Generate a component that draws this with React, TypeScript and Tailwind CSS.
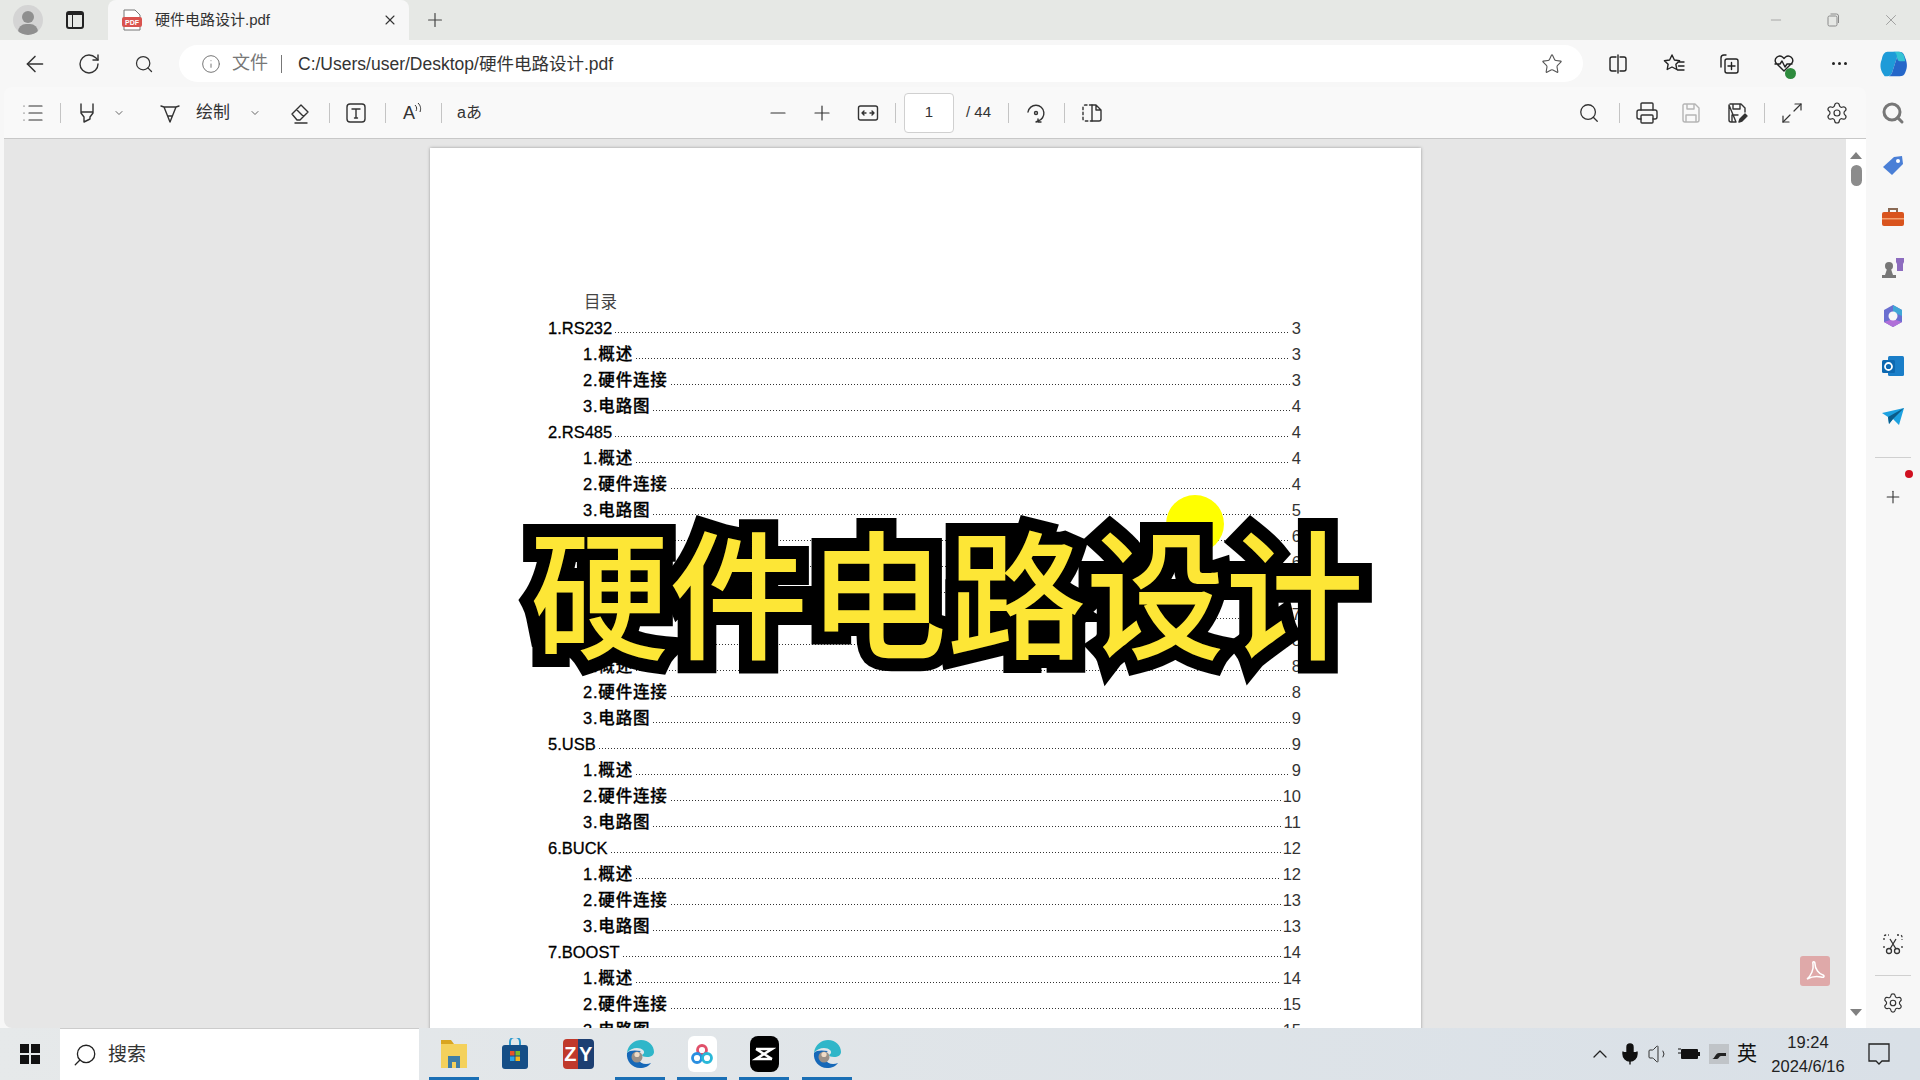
import { ArrowLeft, ChevronDown, ChevronUp, Info, List, Maximize2, Mic, Minus, Plus, Printer, RotateCw, Search, Settings, Star, Volume1, X } from 'lucide-react';
import type { ReactNode } from 'react';

const FONT = "font-['Liberation_Sans','Noto_Sans_CJK_SC',sans-serif]";

type Row = { label: string; page: number; top?: boolean };

const sub = (a: number, b: number, c: number): Row[] => [
  { label: '1.概述', page: a },
  { label: '2.硬件连接', page: b },
  { label: '3.电路图', page: c },
];

const rows: Row[] = [
  { label: '1.RS232', page: 3, top: true },
  ...sub(3, 3, 4),
  { label: '2.RS485', page: 4, top: true },
  ...sub(4, 4, 5),
  { label: '3.CAN', page: 6, top: true },
  ...sub(6, 7, 7),
  { label: '4.I2C', page: 8, top: true },
  ...sub(8, 8, 9),
  { label: '5.USB', page: 9, top: true },
  ...sub(9, 10, 11),
  { label: '6.BUCK', page: 12, top: true },
  ...sub(12, 13, 13),
  { label: '7.BOOST', page: 14, top: true },
  ...sub(14, 15, 15),
];

function Glyph({ children, className = 'text-[#333]' }: { children: ReactNode; className?: string }) {
  return (
    <svg viewBox="0 0 24 24" fill="none" stroke="currentColor" strokeWidth="1.4" strokeLinejoin="round" strokeLinecap="round" className={`w-6 h-6 shrink-0 ${className}`}>
      {children}
    </svg>
  );
}

function Sep({ className }: { className: string }) {
  return <div className={`w-px h-5 bg-[#c4c4c4] shrink-0 ${className}`} />;
}

function TocRow({ row }: { row: Row }) {
  return (
    <div className={`flex items-center h-[26px] ${row.top ? '' : 'pl-[35px]'}`}>
      <span className={`font-medium text-black [-webkit-text-stroke:0.3px_#000] ${row.top ? '' : 'tracking-[0.8px]'}`}>{row.label}</span>
      <span className="flex-1 ml-[3px] mr-[2px] mt-[9px] h-px bg-[linear-gradient(to_right,#333_1px,transparent_1px)] bg-[length:3px_1px]" />
      <span className="text-[#333]">{row.page}</span>
    </div>
  );
}

function EdgeLogo() {
  return (
    <svg viewBox="0 0 32 32" className="w-8 h-8">
      <path d="M3 15C4 6 11 2 17 2c8 0 13 6 13 12 0 3-3 5-7 5-3 0-5-1-5-2 2-1 3-3 1-5-3-3-12-3-16 3z" fill="#2fb6c9" />
      <path d="M3 15c-1 8 5 15 13 15 5 0 9-2 11-5-5 2-11 1-13-4-1-4 1-7 3-8-6-1-12-1-14 2z" fill="#1668b8" />
      <circle cx="13" cy="19" r="5.5" fill="#9a9088" />
      <circle cx="13" cy="16.5" r="2.6" fill="#f0dcc8" />
    </svg>
  );
}

function TaskIcon({ children, active, className }: { children: ReactNode; active?: boolean; className: string }) {
  return (
    <div className={`relative w-[50px] h-full flex items-center justify-center shrink-0 ${className}`}>
      {children}
      {active && <div className="absolute left-0 right-0 bottom-0 h-[3px] bg-[#1a6fb5]" />}
    </div>
  );
}

export default function App() {
  return (
    <div className={`relative w-[1920px] h-[1080px] overflow-hidden flex flex-col bg-[#f7f7f7] ${FONT}`}>
      {/* tab strip */}
      <div className="h-10 shrink-0 flex items-center bg-[#e6e8e5]">
        <div className="relative ml-[13px] w-[30px] h-[30px] rounded-full bg-[#d4d4d4] overflow-hidden shrink-0">
          <div className="absolute left-[9px] top-[6px] w-3 h-3 rounded-full bg-[#8f8f8f]" />
          <div className="absolute left-[5px] top-[19px] w-5 h-4 rounded-full bg-[#8f8f8f]" />
        </div>
        <div className="w-[18px] h-[18px] ml-[23px] shrink-0 rounded-[3px] border-2 border-[#222] border-t-4 flex">
          <div className="w-[5px] border-r border-[#222]" />
        </div>
        <div className="ml-[24px] w-[301px] h-[40px] self-end bg-[#f7f7f7] rounded-t-lg flex items-center shrink-0">
          <svg viewBox="0 0 20 22" className="ml-[14px] w-5 h-[22px] shrink-0">
            <path d="M2 1h11l5 5v15H2z" fill="#fff" stroke="#777" strokeWidth="1" />
            <rect x="0" y="8" width="20" height="10" rx="2" fill="#d9534f" />
            <text x="10" y="16" textAnchor="middle" fontSize="7" fontWeight="700" fill="#fff">PDF</text>
          </svg>
          <span className="ml-[13px] text-[15px] text-[#333]">硬件电路设计.pdf</span>
          <X className="ml-auto mr-[11px] w-4 h-4 text-[#333]" strokeWidth={1.6} />
        </div>
        <Plus className="ml-[15px] w-[22px] h-[22px] text-[#444]" strokeWidth={1.3} />
        <div className="ml-auto flex items-center text-[#8a8a8a]">
          <Minus className="w-4 h-4" strokeWidth={1} />
          <svg viewBox="0 0 16 16" fill="none" stroke="currentColor" className="ml-[41px] w-4 h-4">
            <rect x="3" y="4" width="9" height="10" rx="1.5" />
            <path d="M5.5 2h6a2 2 0 0 1 2 2v7" />
          </svg>
          <X className="ml-[41px] mr-[20px] w-[18px] h-[18px]" strokeWidth={1} />
        </div>
      </div>

      {/* address row */}
      <div className="h-[47px] shrink-0 flex items-center">
        <ArrowLeft className="ml-[22px] w-[26px] h-[26px] text-[#333]" strokeWidth={1.4} />
        <RotateCw className="ml-[29px] w-[24px] h-[24px] text-[#333]" strokeWidth={1.4} />
        <Search className="ml-[33px] w-5 h-5 text-[#333]" strokeWidth={1.5} />
        <div className="ml-[25px] w-[1404px] h-[37px] rounded-full bg-white flex items-center shrink-0">
          <Info className="ml-[22px] w-5 h-5 text-[#777]" strokeWidth={1.2} />
          <span className="ml-[11px] text-[18px] text-[#777]">文件</span>
          <div className="ml-[13px] w-px h-[18px] bg-[#777]" />
          <span className="ml-[16px] mt-px text-[17.5px] text-[#333]">C:/Users/user/Desktop/硬件电路设计.pdf</span>
          <Star className="ml-auto mr-[20px] w-[22px] h-[22px] text-[#555]" strokeWidth={1.2} />
        </div>
        <Glyph className="ml-[23px] text-[#222]">
          <path d="M12 3v18M10 5H6a2 2 0 0 0-2 2v10a2 2 0 0 0 2 2h4M14 5h4a2 2 0 0 1 2 2v10a2 2 0 0 1-2 2h-4" />
        </Glyph>
        <Glyph className="ml-[32px] text-[#222]">
          <path d="M10 3l2.4 5 5.2.7-3.7 3.6.9 5.2L10 15l-4.800 2.500.9-5.200L2.400 8.700 7.600 8zM16 10h6M16.500 14h5.500M15.500 18h6.500" />
        </Glyph>
        <Glyph className="ml-[31px] text-[#222]">
          <path d="M9 3H7a3 3 0 0 0-3 3v9M10 7h9a2 2 0 0 1 2 2v10a2 2 0 0 1-2 2h-9a2 2 0 0 1-2-2V9a2 2 0 0 1 2-2zM14.500 10.500v7M11 14h7" />
        </Glyph>
        <div className="relative ml-[31px] shrink-0">
          <Glyph className="text-[#222]">
            <path d="M12 19l-8-8a4.500 4.500 0 0 1 6.500-6l1.500 1.500L13.500 5A4.500 4.500 0 0 1 20 11l-8 8zM3 12h5l2-3 3 6 2-3h5" />
          </Glyph>
          <div className="absolute right-[0px] bottom-[-3px] w-[11px] h-[11px] rounded-full bg-[#2e8b3d]" />
        </div>
        <div className="ml-[36px] flex gap-[3px] shrink-0">
          <div className="w-[3px] h-[3px] rounded-full bg-[#222]" />
          <div className="w-[3px] h-[3px] rounded-full bg-[#222]" />
          <div className="w-[3px] h-[3px] rounded-full bg-[#222]" />
        </div>
        <svg viewBox="0 0 32 32" className="ml-[32px] w-[30px] h-[30px] shrink-0">
          <path d="M9 3h12l-7 22c-1 3-3 4-5 4H6C2 24 0 18 3 11 4 6 6 3 9 3z" fill="#1e9bd8" />
          <path d="M14 25L21 3c3 0 5 1 6 4 3 7 4 12 1 18-1 3-3 4-6 4H10c2 0 3-2 4-4z" fill="#2567c9" />
          <path d="M19 7c-1-3-2-4-4-4h6c3 0 5 2 6 5l1 5h-6c-2 0-3-3-3-6z" fill="#35c3d4" />
        </svg>
      </div>

      {/* toolbar + viewer + sidebar */}
      <div className="flex-1 min-h-0 flex">
        <div className="ml-1 w-[1862px] flex flex-col shrink-0">
          <div className="h-[52px] shrink-0 flex items-center bg-[#f9f9f9] rounded-t-lg border-b border-[#c8c8c8] text-[#333]">
            <List className="ml-[17px] w-6 h-6 shrink-0" strokeWidth={1.2} />
            <Sep className="ml-[15px]" />
            <Glyph className="ml-[14px]"><path d="M6 3v9l3 4v5l6-3v-2l3-4V3M6 11h12" /></Glyph>
            <ChevronDown className="ml-[14px] w-3 h-3 shrink-0 text-[#666]" />
            <Glyph className="ml-[33px]"><path d="M3 5l3 1h12l3-1M6 6l6 15 6-15M10 15h4" /></Glyph>
            <span className="ml-[14px] w-[35px] text-[17px] shrink-0 whitespace-nowrap">绘制</span>
            <ChevronDown className="ml-[18px] w-3 h-3 shrink-0 text-[#666]" />
            <Glyph className="ml-[27px]"><path d="M4 13l9-9 7 7-8 8H9zM8.500 8.500l7 7M7 22h12" /></Glyph>
            <Sep className="ml-[17px]" />
            <Glyph className="ml-[14px]">
              <rect x="3" y="3" width="18" height="18" rx="3" />
              <path d="M8 8h8M12 8v9M10.500 17h3" />
            </Glyph>
            <Sep className="ml-[17px]" />
            <div className="relative ml-[14px] w-6 h-6 shrink-0 flex items-center">
              <span className="ml-[3px] text-[18px] leading-none">A</span>
              <svg viewBox="0 0 10 12" fill="none" stroke="currentColor" className="absolute right-0 top-[2px] w-2.5 h-3"><path d="M1 2c2 2 2 4 1 6M4 0c3 3 3 6 2 9" /></svg>
            </div>
            <Sep className="ml-[17px]" />
            <span className="ml-[15px] w-6 text-[16px] shrink-0 whitespace-nowrap">aあ</span>
            <Minus className="ml-[285px] w-6 h-6 shrink-0" strokeWidth={1.2} />
            <Plus className="ml-[20px] w-6 h-6 shrink-0" strokeWidth={1.2} />
            <Glyph className="ml-[22px]">
              <rect x="2.500" y="5" width="19" height="14" rx="2" />
              <path d="M6 12h4M6 12l2-2M6 12l2 2M18 12h-4M18 12l-2-2M18 12l-2 2" />
            </Glyph>
            <Sep className="ml-[15px]" />
            <div className="ml-[8px] w-[50px] h-10 shrink-0 bg-white border border-[#d0d0d0] rounded flex items-center justify-center text-[15px]">1</div>
            <span className="ml-[12px] w-7 text-[15px] shrink-0 whitespace-nowrap">/ 44</span>
            <Sep className="ml-[14px]" />
            <Glyph className="ml-[15px]">
              <path d="M4 11a8 8 0 1 1 10 9l-2 1M14 18v3h3" />
              <circle cx="12" cy="12" r="1.500" />
            </Glyph>
            <Sep className="ml-[16px]" />
            <Glyph className="ml-[15px]">
              <path d="M12 4H5a2 2 0 0 0-2 2v12a2 2 0 0 0 2 2h7" strokeDasharray="2.500 2.500" />
              <path d="M12 4h4l5 5v9a2 2 0 0 1-2 2h-7zM16 4v5h5" />
            </Glyph>
            <Search className="ml-[474px] w-[22px] h-[22px] shrink-0" strokeWidth={1.4} />
            <Sep className="ml-[19px]" />
            <Printer className="ml-[15px] w-6 h-6 shrink-0" strokeWidth={1.4} />
            <Glyph className="ml-[20px] text-[#b5b5b5]">
              <path d="M5 3h11l4 4v12a2 2 0 0 1-2 2H6a2 2 0 0 1-2-2V4zM8 3v5h7V3M7 21v-7h10v7" />
            </Glyph>
            <Glyph className="ml-[22px]">
              <path d="M5 3h11l4 4v4M11 21H6a2 2 0 0 1-2-2V4zM8 3v5h7V3M7 21v-7h6" />
              <path d="M14 21l1-3 5-5 2 2-5 5z" fill="currentColor" />
            </Glyph>
            <Sep className="ml-[15px]" />
            <Maximize2 className="ml-[15px] w-6 h-6 shrink-0" strokeWidth={1.2} />
            <Settings className="ml-[21px] w-6 h-6 shrink-0" strokeWidth={1.2} />
          </div>

          <div className="flex-1 min-h-0 flex rounded-bl-lg overflow-hidden">
            <div className="flex-1 bg-[#e6e6e6] overflow-hidden">
              <div className="ml-[426px] mt-[9px] w-[991px] pt-[141px] pl-[118px] pr-[120px] bg-white shadow-[0_0_3px_#999] text-[16.5px] leading-none">
                <div className="flex items-center h-[26px] pl-[36px] text-[#444]">目录</div>
                {rows.map((row, i) => (
                  <TocRow key={i} row={row} />
                ))}
              </div>
            </div>
            <div className="w-5 bg-white shrink-0 flex flex-col items-center relative">
              <div className="mt-[13px] w-0 h-0 border-x-[6px] border-x-transparent border-b-[7px] border-b-[#808080]" />
              <div className="mt-[6px] w-[11px] h-[21px] rounded-full bg-[#8c8c8c]" />
              <div className="mt-auto mb-[12px] w-0 h-0 border-x-[6px] border-x-transparent border-t-[7px] border-t-[#808080]" />
            </div>
          </div>
        </div>

        {/* sidebar */}
        <div className="flex-1 flex flex-col items-center">
          <Search className="mt-[14px] w-6 h-6 text-[#777]" strokeWidth={3} />
          <svg viewBox="0 0 24 24" className="mt-[29px] w-6 h-6"><path d="M2 13L13 3l8-1 1 8-11 11z" fill="#4a7fd6" /><circle cx="17" cy="7" r="2" fill="#fff" /></svg>
          <svg viewBox="0 0 24 24" className="mt-[27px] w-6 h-6"><rect x="1" y="7" width="22" height="14" rx="2" fill="#d9541e" /><path d="M8 7V4h8v3" fill="none" stroke="#8a6a55" strokeWidth="2" /><rect x="1" y="13" width="22" height="1.500" fill="#f4a070" /></svg>
          <svg viewBox="0 0 24 24" className="mt-[26px] w-6 h-6"><circle cx="8" cy="11" r="4" fill="#777" /><path d="M6 14h4l2 6H4zM1 20h14v3H1z" fill="#777" /><path d="M15 3h8v4l-1 2v7h-6V9l-1-2z" fill="#8d6cbf" /></svg>
          <svg viewBox="0 0 24 24" className="mt-[25px] w-6 h-6"><path d="M12 1l9 5v12l-9 5-9-5V6z" fill="#6a6fd0" /><path d="M12 1l9 5v6l-9-4z" fill="#3fa7d6" /><path d="M3 18l9 5 9-5-9-3z" fill="#b06fd8" /><circle cx="12" cy="12" r="4.500" fill="#f7f7f7" /></svg>
          <svg viewBox="0 0 24 24" className="mt-[26px] w-6 h-6"><rect x="7" y="2" width="16" height="20" rx="1.500" fill="#1a7ec8" /><rect x="1" y="6" width="13" height="13" rx="1.500" fill="#0d68b0" /><circle cx="7.500" cy="12.500" r="3.500" fill="none" stroke="#fff" strokeWidth="1.800" /></svg>
          <svg viewBox="0 0 24 24" className="mt-[26px] w-6 h-6"><path d="M1 9l22-5-5 17-6-6-4 5-1-7z" fill="#1da1e0" /><path d="M7 13l16-9-11 11-4 5z" fill="#0b5c8a" /></svg>
          <div className="mt-[29px] w-9 h-px bg-[#d0d0d0]" />
          <div className="relative mt-[29px]">
            <Plus className="w-5 h-5 text-[#333]" strokeWidth={1.3} />
            <div className="absolute right-[-10px] top-[-17px] w-2 h-2 rounded-full bg-[#d01020]" />
          </div>
          <svg viewBox="0 0 24 24" fill="none" stroke="#333" strokeWidth="1.300" className="mt-auto w-6 h-6">
            <path d="M3 8V5a2 2 0 0 1 2-2h3M16 3h3a2 2 0 0 1 2 2v3M3 14v3M21 14v3" strokeDasharray="2 2" />
            <circle cx="8" cy="19" r="2.500" /><circle cx="16" cy="19" r="2.500" /><path d="M9 17l6-10M15 17L9 7" />
          </svg>
          <div className="mt-[19px] w-9 h-px bg-[#d0d0d0]" />
          <Settings className="mt-4 mb-[14px] w-[22px] h-[22px] text-[#333]" strokeWidth={1.3} />
        </div>
      </div>

      {/* taskbar */}
      <div className="h-[52px] shrink-0 flex items-stretch bg-gradient-to-r from-[#e6e9ea] to-[#d9e0e7] text-[#111]">
        <div className="w-[60px] shrink-0 flex items-center justify-center">
          <div className="grid grid-cols-2 gap-[2px] w-[20px] h-[20px]">
            <div className="bg-[#111]" /><div className="bg-[#111]" /><div className="bg-[#111]" /><div className="bg-[#111]" />
          </div>
        </div>
        <div className="w-[359px] shrink-0 bg-white border-t border-[#ccc] flex items-center">
          <Search className="ml-[12px] w-[26px] h-[26px] -scale-x-100 text-[#222]" strokeWidth={1.2} />
          <span className="ml-[10px] mt-px text-[19px] text-[#333]">搜索</span>
        </div>
        <TaskIcon active className="ml-[10px]">
          <svg viewBox="0 0 28 32" className="w-7 h-8"><path d="M1 2h10l3 4H1z" fill="#d9a520" /><path d="M1 6h26v24H1z" fill="#f4d15c" /><path d="M8 30V18h12v12h-4v-6h-4v6z" fill="#3f7ea6" /></svg>
        </TaskIcon>
        <TaskIcon className="ml-[11px]">
          <svg viewBox="0 0 28 32" className="w-7 h-8"><path d="M9 8V4a5 5 0 0 1 10 0v4" fill="none" stroke="#2e9bd0" strokeWidth="2" /><rect x="1" y="7" width="26" height="24" rx="3" fill="#154e86" /><rect x="9" y="13" width="4.500" height="4.500" fill="#e8502a" /><rect x="14.500" y="13" width="4.500" height="4.500" fill="#7fba2a" /><rect x="9" y="18.500" width="4.500" height="4.500" fill="#2aa4e8" /><rect x="14.500" y="18.500" width="4.500" height="4.500" fill="#f4b81c" /></svg>
        </TaskIcon>
        <TaskIcon className="ml-[13px]">
          <div className="flex w-[31px] h-[30px] text-[20px] font-bold text-white leading-[30px] text-center rounded-sm overflow-hidden">
            <span className="flex-1 bg-[#c0392b]">Z</span>
            <span className="flex-1 bg-[#1d3f72]">Y</span>
          </div>
        </TaskIcon>
        <TaskIcon active className="ml-[12px]"><EdgeLogo /></TaskIcon>
        <TaskIcon active className="ml-[12px]">
          <div className="w-[29px] h-[36px] rounded-md bg-white flex items-center justify-center">
            <svg viewBox="0 0 24 24" fill="none" strokeWidth="2.800" className="w-6 h-6"><circle cx="12" cy="8" r="4.500" stroke="#e0506a" /><circle cx="7" cy="16" r="4.500" stroke="#2a8fe0" /><circle cx="17" cy="16" r="4.500" stroke="#2ab8d8" /></svg>
          </div>
        </TaskIcon>
        <TaskIcon active className="ml-[12px]">
          <div className="w-[29px] h-[36px] rounded-lg bg-black flex items-center justify-center">
            <svg viewBox="0 0 24 24" fill="none" stroke="#fff" strokeWidth="2.500" className="w-6 h-6"><path d="M4 7h16L4 17h16M4 7l16 10" /></svg>
          </div>
        </TaskIcon>
        <TaskIcon active className="ml-[13px]"><EdgeLogo /></TaskIcon>

        <div className="ml-auto flex items-center">
          <ChevronUp className="w-6 h-6 text-[#222]" strokeWidth={1.3} />
          <Mic className="ml-[6px] w-6 h-6 text-[#111]" fill="#111" strokeWidth={1.4} />
          <Volume1 className="ml-[5px] w-6 h-6 text-[#333]" strokeWidth={1} />
          <svg viewBox="0 0 22 14" className="ml-[7px] w-[22px] h-[14px]"><path d="M0 2h3M0 6h3" stroke="#111" /><rect x="3" y="2" width="17" height="10" rx="1" fill="#111" /><rect x="20" y="5" width="2" height="4" fill="#111" /></svg>
          <svg viewBox="0 0 20 20" className="ml-[9px] w-5 h-5"><rect width="20" height="20" fill="#c0c4c8" /><path d="M3 15c3 0 3-6 7-6h7v3h-5c-2 0-2 3-4 3z" fill="#222" /></svg>
          <span className="ml-[8px] text-[20px] leading-none">英</span>
          <div className="ml-[13px] w-[76px] flex flex-col items-center text-[16.5px] leading-[24px] text-[#222]">
            <span>19:24</span>
            <span className="whitespace-nowrap">2024/6/16</span>
          </div>
          <svg viewBox="0 0 22 22" fill="none" stroke="#222" strokeWidth="1.300" className="ml-[22px] mr-[30px] w-[22px] h-[22px]"><path d="M1 1h20v17h-7l-3 3-3-3H1z" /></svg>
        </div>
      </div>

      {/* laser pointer spot, under the title */}
      <div className="absolute left-[1166px] top-[495px] w-[58px] h-[58px] rounded-full bg-[#ffff00]" />

      {/* floating Acrobat button */}
      <div className="absolute left-[1800px] top-[956px] w-[30px] h-[30px] rounded-[3px] bg-[#dfa9a9] flex items-center justify-center">
        <svg viewBox="0 0 24 24" fill="none" stroke="#fff" strokeWidth="1.500" className="w-6 h-6"><path d="M4 20c4-3 7-10 6-15-1-3 2-3 2 0 0 5 4 10 8 11 2 1 1 3-2 2-5-1-10 0-14 2z" /></svg>
      </div>

      {/* video title */}
      <div className="absolute left-[530px] top-[508px] text-[139px] leading-[160px] font-medium whitespace-nowrap font-['Noto_Sans_CJK_SC',sans-serif] text-[#fde636] [-webkit-text-stroke:26px_#000] [paint-order:stroke_fill]">
        硬件电路设计
      </div>
    </div>
  );
}
